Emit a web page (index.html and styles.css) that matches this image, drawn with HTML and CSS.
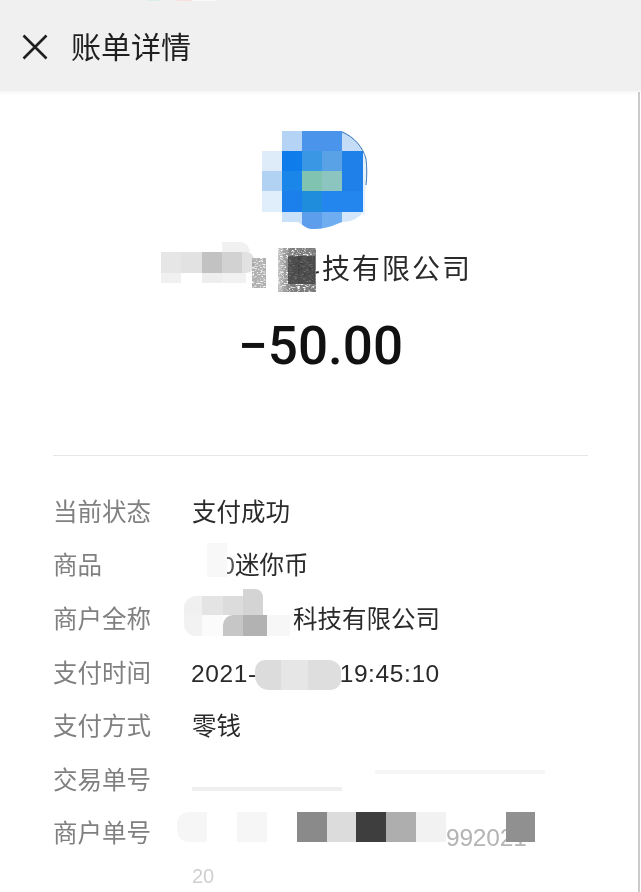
FILE: index.html
```html
<!DOCTYPE html>
<html lang="zh">
<head>
<meta charset="utf-8">
<title>账单详情</title>
<link rel="stylesheet" href="styles.css">
</head>
<body>
<div class="page">
  <header class="bar">
    <svg class="close" width="26" height="26" viewBox="0 0 26 26"><path d="M1.5 1.5 L24.5 24.5 M24.5 1.5 L1.5 24.5" fill="none" stroke="#1f1f1f" stroke-width="2.6"/></svg>
    <h1 class="title">账单详情</h1>
  </header>
  <main class="content">
    <i class="edge"></i>
    <svg class="avatar" width="110" height="100" viewBox="0 0 110 100">
      <defs><clipPath id="av"><path d="M20 0H80C90 4 97 12 101 20V81C98 86 90 91 80 91L70 95C60 98 55 98 50 98C44 98 40 93 36 91H20V81H0V20H20Z"/></clipPath></defs>
      <path d="M102 20C105 32 106 50 103 62V84H101V20Z" fill="#e6f1fb"/>
      <g clip-path="url(#av)">
        <rect x="20" y="0" width="20" height="20" fill="#b5d4f5"/><rect x="40" y="0" width="20" height="20" fill="#4a94ec"/><rect x="60" y="0" width="20" height="20" fill="#4a94ec"/><rect x="80" y="0" width="22" height="20" fill="#c4dcf6"/>
        <rect x="0" y="20" width="20" height="20" fill="#deebf9"/><rect x="20" y="20" width="20" height="20" fill="#0f7cec"/><rect x="40" y="20" width="20" height="20" fill="#3a97e4"/><rect x="60" y="20" width="20" height="20" fill="#5aa2e6"/><rect x="80" y="20" width="22" height="20" fill="#2080ea"/>
        <rect x="0" y="40" width="20" height="20" fill="#b2d2f4"/><rect x="20" y="40" width="20" height="20" fill="#1a86ea"/><rect x="40" y="40" width="20" height="20" fill="#7fc3b0"/><rect x="60" y="40" width="20" height="20" fill="#8cc4c0"/><rect x="80" y="40" width="22" height="20" fill="#2080ea"/>
        <rect x="0" y="60" width="20" height="21" fill="#e0edfa"/><rect x="20" y="60" width="20" height="21" fill="#1b80ec"/><rect x="40" y="60" width="20" height="21" fill="#1f8ddc"/><rect x="60" y="60" width="20" height="21" fill="#2385ee"/><rect x="80" y="60" width="22" height="21" fill="#2385ee"/>
        <rect x="20" y="81" width="20" height="18" fill="#c8e0f8"/><rect x="40" y="81" width="20" height="18" fill="#5c9eec"/><rect x="60" y="81" width="20" height="18" fill="#6eaef0"/><rect x="80" y="81" width="22" height="18" fill="#d4e6fa"/>
      </g>
      <path d="M80 1C92 6 101 16 104 28C105 36 105 46 104 54" fill="none" stroke="#3b78b8" stroke-width="1"/>
    </svg>
    <div class="merchant">
      <span class="merchant-mask">
        <i class="px p1"></i><i class="px p2"></i><i class="px p3"></i><i class="px p4"></i><i class="px p5"></i>
        <i class="px q1"></i><i class="px q3"></i><i class="px q4"></i><i class="px q0"></i>
        <svg class="smudge" width="70" height="60" viewBox="0 0 70 60">
          <defs>
            <filter id="grain" x="0" y="0" width="100%" height="100%"><feTurbulence type="fractalNoise" baseFrequency="0.35 0.9" numOctaves="2" seed="4"/><feColorMatrix values="0 0 0 0 0.2 0 0 0 0 0.2 0 0 0 0 0.2 0 0 0 -4 3"/><feComposite in2="SourceGraphic" operator="in"/></filter>
            <linearGradient id="ink" x1="0" x2="1" y1="0" y2="0"><stop offset="0" stop-color="#555" stop-opacity=".45"/><stop offset=".35" stop-color="#333"/><stop offset="1" stop-color="#2c2c2c"/></linearGradient>
          </defs>
          <rect x="0" y="18" width="14" height="30" fill="#9a9a9a" filter="url(#grain)" opacity=".6"/>
          <rect x="26" y="8" width="38" height="44" fill="url(#ink)" filter="url(#grain)"/>
          <rect x="36" y="16" width="27" height="28" fill="#3a3a3a" opacity=".72"/>
        </svg>
      </span><span class="merchant-name">科技有限公司</span>
    </div>
    <div class="amount">−50.00</div>
    <hr class="rule">
    <dl class="rows">
      <div class="row"><dt>当前状态</dt><dd>支付成功</dd></div>
      <div class="row"><dt>商品</dt><dd class="masked"><span class="gap gap-s"><span class="digit">0</span></span>迷你币</dd></div>
      <div class="row"><dt>商户全称</dt><dd class="masked"><span class="gap gap-m"><i class="b b1"></i><i class="b b2"></i><i class="b b3"></i><i class="b b4"></i><i class="b b5"></i><i class="b b6"></i><i class="b b7"></i><i class="b b8"></i><i class="b b9"></i></span>科技有限公司</dd></div>
      <div class="row"><dt>支付时间</dt><dd class="masked"><span class="num">2021-</span><span class="gap gap-t"></span><span class="num">19:45:10</span></dd></div>
      <div class="row"><dt>支付方式</dt><dd>零钱</dd></div>
      <div class="row"><dt>交易单号</dt><dd class="masked faint-box"><span class="faint faint-top"></span><span class="faint faint-bottom"></span></dd></div>
      <div class="row row-tall"><dt>商户单号</dt><dd class="order">
        <span class="strip"><i class="s s1"></i><i class="s s2"></i><i class="s s3"></i><i class="s s4"></i><i class="s s5"></i><i class="s s6"></i><i class="s s7"></i><i class="s s8"></i><i class="s s9"></i><span class="s s10">992021</span><i class="s s11"></i></span>
        <span class="order-end">20</span>
      </dd></div>
    </dl>
  </main>
</div>
</body>
</html>
```
FILE: styles.css
```css
* { box-sizing: border-box; }
html, body { margin: 0; padding: 0; background: #fff; }
body { font-family: "Liberation Sans", "Noto Sans CJK SC", sans-serif; }
.page { width: 641px; height: 892px; overflow: hidden; filter: blur(0.35px); }
.bar {
  height: 91px;
  display: flex;
  align-items: center;
  padding: 5px 0 0 22px;
  gap: 23px;
  box-shadow: 0 2px 3px #f6f6f6;
  background:
    linear-gradient(#dcefe4, #dcefe4) 147px 0 / 13px 1px no-repeat,
    linear-gradient(#f7dfe0, #f7dfe0) 177px 0 / 15px 1px no-repeat,
    linear-gradient(#fafafa, #fafafa) 192px 0 / 25px 1px no-repeat,
    #f0f0f0;
}
.close { flex: none; position: relative; top: -1px; }
.title { margin: 0; font-size: 30px; font-weight: 400; color: #1f1f1f; line-height: 1; }
.content { position: relative; padding: 40px 53px 0; display: flex; flex-direction: column; height: 801px; }
.edge { position: absolute; top: 1px; right: 1px; bottom: 0; width: 2px; background: #cbcbcb; }
.avatar { display: block; margin-left: 209px; flex: none; }

.merchant { display: flex; justify-content: center; margin: 19px -53px 0; height: 40px; align-items: center; }
.merchant-mask { width: 123px; height: 40px; display: block; position: relative; flex: none; }
.merchant-name { font-size: 28px; letter-spacing: 2px; color: #2a2a2a; line-height: 40px; white-space: nowrap; }
.px { position: absolute; display: block; }
.p1 { left: -8px; top: 2px; width: 20px; height: 21px; background: #e6e6e6; }
.p2 { left: 12px; top: 2px; width: 21px; height: 21px; background: #e2e2e2; }
.p3 { left: 33px; top: 2px; width: 20px; height: 21px; background: #c2c2c2; }
.p4 { left: 53px; top: 2px; width: 20px; height: 21px; background: #d2d2d2; }
.p5 { left: 73px; top: 2px; width: 12px; height: 21px; background: #e2e2e2; border-radius: 0 8px 8px 0; }
.q0 { left: 53px; top: -8px; width: 28px; height: 10px; background: #f1f1f1; border-radius: 0 12px 0 0; }
.q1 { left: -8px; top: 23px; width: 20px; height: 10px; background: #f0f0f0; }
.q3 { left: 33px; top: 23px; width: 20px; height: 10px; background: #eeeeee; }
.q4 { left: 53px; top: 23px; width: 24px; height: 10px; background: #f1f1f1; }
.smudge { position: absolute; left: 83px; top: -10px; z-index: 1; }

.amount { font-family: "Roboto", sans-serif; font-weight: 500; font-size: 53px; line-height: 64px; color: #111; text-align: center; margin-top: 24px; }
.rule { margin: 77px 0 0; border: 0; height: 1px; background: #e6e6e6; width: 535px; flex: none; }

.rows { margin: 30px 0 0; padding: 0; display: flex; flex-direction: column; }
.row { display: flex; height: 53.7px; align-items: center; }
dt { width: 139px; flex: none; font-size: 24.5px; color: #808080; line-height: 1; }
dd { margin: 0; font-size: 24.5px; color: #2a2a2a; line-height: 1; white-space: nowrap; display: flex; align-items: center; }
.num { letter-spacing: 0.6px; margin-left: -1px; }
.gap { display: block; position: relative; flex: none; height: 34px; }

.gap-s { width: 43px; display: flex; justify-content: flex-end; align-items: center; }
.digit { color: #555; }
.gap-s::before { content: ""; position: absolute; left: 15px; top: -7px; width: 20px; height: 34px; background: #f8f8f8; }

.gap-m { width: 109px; margin-left: -8px; }
.b { position: absolute; display: block; }
.b1 { left: 0; top: -7px; width: 18px; height: 19px; background: #f0f0f0; border-radius: 12px 0 0 0; }
.b2 { left: 18px; top: -7px; width: 21px; height: 19px; background: #e4e4e4; }
.b3 { left: 39px; top: -7px; width: 20px; height: 19px; background: #dcdcdc; }
.b4 { left: 59px; top: -14px; width: 20px; height: 26px; background: #d4d4d4; border-radius: 0 8px 0 0; }
.b5 { left: 0; top: 12px; width: 18px; height: 21px; background: #f2f2f2; border-radius: 0 0 0 12px; }
.b6 { left: 18px; top: 12px; width: 21px; height: 21px; background: #fbfbfb; }
.b7 { left: 39px; top: 12px; width: 20px; height: 21px; background: #c6c6c6; border-radius: 10px 0 0 0; }
.b8 { left: 59px; top: 12px; width: 24px; height: 21px; background: #b2b2b2; }
.b9 { left: 83px; top: 12px; width: 23px; height: 21px; background: #f7f7f7; }

.gap-t { width: 86px; height: 30px; margin: 0 0 0 -2px; background: linear-gradient(90deg, #dcdcdc 0 30%, #e6e6e6 30% 62%, #dedede 62%); border-radius: 10px 12px 10px 14px; position: relative; top: 1px; }

.faint-box { display: block; position: relative; width: 395px; height: 22px; }
.faint { display: block; position: absolute; height: 4px; }
.faint-top { left: 183px; top: 0; width: 170px; background: #f6f6f6; }
.faint-bottom { left: 0; top: 17px; width: 150px; background: #efefef; }

.row-tall { height: auto; align-items: flex-start; }
.row-tall dt { margin-top: 14px; }
.order { display: flex; flex-direction: column; align-items: flex-start; }
.strip { display: flex; height: 30px; margin: 4px 0 0 -15px; }
.s { display: block; width: 30px; flex: none; }
.s1 { background: #f6f6f6; border-radius: 12px 0 0 12px; }
.s2 { background: #fff; }
.s3 { background: #f6f6f6; }
.s4 { background: #fff; }
.s5 { width: 30px; background: #8a8a8a; margin-left: 0; }
.s6 { width: 29px; background: #dcdcdc; }
.s7 { background: #3e3e3e; }
.s8 { background: #aeaeae; }
.s9 { background: #f2f2f2; }
.s10 { width: 60px; color: #b4b4b4; font-size: 24.5px; line-height: 1; padding-top: 14px; height: 30px; overflow: visible; letter-spacing: -0.2px; text-align: right; }
.s11 { width: 29px; background: #909090; position: relative; }
.order-end { margin-top: 24px; color: #cfcfcf; font-size: 20px; line-height: 1; }
```
